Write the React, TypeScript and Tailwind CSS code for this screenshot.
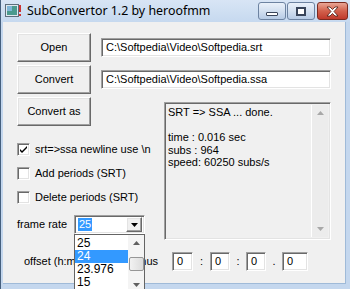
import React from 'react'

const ui = { fontFamily: '"Liberation Sans", Arial, sans-serif' }

const raised =
  'border border-t-white border-l-white border-b-[#696969] border-r-[#696969] shadow-[inset_-1px_-1px_#a0a0a0,inset_1px_1px_#e3e3e3] bg-[#f0f0f0]'
const sunken =
  'border border-t-[#a0a0a0] border-l-[#a0a0a0] border-b-white border-r-white shadow-[inset_1px_1px_#696969,inset_-1px_-1px_#e3e3e3]'

const Btn = ({ label }: { label: string }) => (
  <div className={`${raised} w-[74px] h-[29px] flex items-center justify-center text-[11px] text-black`}>
    {label}
  </div>
)

const PathInput = ({ value }: { value: string }) => (
  <div className={`${sunken} bg-white w-[230px] h-[19px] flex items-center pl-[4px] text-[11px] text-black`}>
    {value}
  </div>
)

const CheckBox = ({ checked, label }: { checked?: boolean; label: string }) => (
  <div className="flex items-center h-[13px] gap-[5px] text-[11px] text-black">
    <div className={`${sunken} bg-white w-[13px] h-[13px] flex items-center justify-center`}>
      {checked && (
        <svg width="9" height="9" viewBox="0 0 9 9">
          <path d="M1 4 L3 6 L8 1 L8 3 L3 8 L1 6 Z" fill="#000" />
        </svg>
      )}
    </div>
    <span>{label}</span>
  </div>
)

const Tri = ({ down, color = '#000' }: { down?: boolean; color?: string }) => (
  <svg width="7" height="4" viewBox="0 0 7 4">
    <path d={down ? 'M0 0 L7 0 L3.5 4 Z' : 'M0 4 L7 4 L3.5 0 Z'} fill={color} />
  </svg>
)

const SmallBox = ({ w }: { w: string }) => (
  <div className={`${sunken} bg-white ${w} h-[19px] flex items-center pl-[4px] text-[11px] text-black`}>0</div>
)

export default function App() {
  return (
    <div
      className="w-[350px] h-[289px] bg-[#c4d7ee] border-l border-[#46607e] flex flex-col overflow-hidden"
      style={ui}
    >
      {/* title bar */}
      <div className="h-[22px] flex items-center bg-gradient-to-b from-[#d8e5f5] to-[#c6d9ef] shrink-0">
        <svg className="ml-[4px]" width="16" height="14" viewBox="0 0 16 14">
          <rect x="0.5" y="0.5" width="13" height="12" fill="#dfe8ef" stroke="#5d6e7c" />
          <rect x="2" y="2" width="10" height="9" fill="#4b9a8e" />
          <rect x="2" y="2" width="5" height="5" fill="#7fb6d8" />
          <rect x="14" y="1" width="2" height="7" fill="#c33" />
          <rect x="14" y="10" width="2" height="2" fill="#c33" />
        </svg>
        <span className="ml-[6px] text-[12.4px] text-black" style={{ fontFamily: '"Noto Sans", sans-serif' }}>
          SubConvertor 1.2 by heroofmm
        </span>
        <div className="ml-auto flex items-start self-start mt-[2px] mr-[2px] gap-[1px]">
          <div className="w-[28px] h-[18px] rounded-[3px] border border-[#6d83a1] bg-gradient-to-b from-[#eaf1fa] via-[#d3e0f0] to-[#b7cbe5] flex items-center justify-center">
            <div className="w-[12px] h-[4px] mt-[5px] rounded-[1px] border border-[#39455a] bg-white" />
          </div>
          <div className="w-[28px] h-[18px] rounded-[3px] border border-[#6d83a1] bg-gradient-to-b from-[#eaf1fa] via-[#d3e0f0] to-[#b7cbe5] flex items-center justify-center">
            <div className="w-[10px] h-[9px] border-2 border-[#39455a] bg-white" />
          </div>
          <div className="w-[31px] h-[18px] ml-[1px] rounded-[3px] border border-[#7b2a1f] bg-gradient-to-b from-[#e8a595] via-[#d2604c] to-[#c0392b] flex items-center justify-center">
            <svg width="13" height="11" viewBox="0 0 13 11">
              <path
                d="M1 1 L4 1 L6.5 3.5 L9 1 L12 1 L8 5.5 L12 10 L9 10 L6.5 7.5 L4 10 L1 10 L5 5.5 Z"
                fill="#fff"
                stroke="#4a1a12"
                strokeWidth="0.8"
              />
            </svg>
          </div>
        </div>
      </div>

      {/* client area */}
      <div className="ml-[2px] w-[343px] h-[262px] bg-[#f0f0f0] border-r border-b border-[#9fbad8] flex flex-col pl-[14px] pt-[11px] text-[11px]">
        <div className="flex items-center gap-[10px]">
          <Btn label="Open" />
          <PathInput value="C:\Softpedia\Video\Softpedia.srt" />
        </div>
        <div className="flex items-center gap-[10px] mt-[3px]">
          <Btn label="Convert" />
          <PathInput value="C:\Softpedia\Video\Softpedia.ssa" />
        </div>

        <div className="flex mt-[3px]">
          <div className="w-[147px] flex flex-col">
            <Btn label="Convert as" />
            <div className="mt-[17px] flex flex-col gap-[11px]">
              <CheckBox checked label="srt=>ssa newline use \n" />
              <CheckBox label="Add periods (SRT)" />
              <CheckBox label="Delete periods (SRT)" />
            </div>
            <div className="flex items-center mt-[11px] relative">
              <span className="w-[57px]">frame rate</span>
              <div className={`${sunken} bg-white w-[71px] h-[19px] flex items-center pl-[3px] pr-[2px]`}>
                <span className="bg-[#3399ff] text-white px-[1px] leading-[13px]">25</span>
                <div className={`${raised} ml-auto w-[16px] h-[15px] flex items-center justify-center`}>
                  <Tri down />
                </div>
              </div>
              {/* open dropdown list */}
              <div className="absolute left-[57px] top-[19px] w-[71px] h-[60px] bg-white border border-[#646464] flex z-10">
                <div className="flex-1 flex flex-col text-[12px] leading-[13px] pt-[2px]">
                  <div className="pl-[2px]">25</div>
                  <div className="pl-[2px] bg-[#3399ff] text-white">24</div>
                  <div className="pl-[2px]">23.976</div>
                  <div className="pl-[2px]">15</div>
                </div>
                <div className="w-[16px] bg-[#f4f4f4] flex flex-col items-center">
                  <div className="h-[16px] flex items-center justify-center">
                    <Tri color="#606060" />
                  </div>
                  <div className="w-[15px] h-[14px] mt-[6px] rounded-[2px] border border-[#969696] bg-gradient-to-r from-[#f2f2f2] to-[#dcdcdc]" />
                  <div className="mt-auto h-[10px] flex items-start justify-center">
                    <Tri down color="#606060" />
                  </div>
                </div>
              </div>
            </div>
          </div>

          {/* memo */}
          <div className={`${sunken} mt-[5px] w-[167px] h-[138px] bg-[#f0f0f0] flex`}>
            <div className="flex-1 pl-[3px] pt-[3px] leading-[12.6px] text-[11px] text-black">
              <div>SRT =&gt; SSA ... done.</div>
              <div>&nbsp;</div>
              <div>time : 0.016 sec</div>
              <div>subs : 964</div>
              <div>speed: 60250 subs/s</div>
            </div>
            <div className="w-[17px] my-[2px] mr-[2px] border-l border-white bg-[#ececec] flex flex-col items-center justify-between py-[6px]">
              <Tri color="#a8a8a8" />
              <Tri down color="#a8a8a8" />
            </div>
          </div>
        </div>

        <div className="flex items-center mt-[12px]">
          <div className="ml-[7px] w-[134px] flex">
            <span>offset (h:m:s.ms)</span>
            <span className="ml-auto">minus</span>
          </div>
          <SmallBox w="w-[21px] ml-[14px]" />
          <span className="w-[17px] text-center">:</span>
          <SmallBox w="w-[20px]" />
          <span className="w-[16px] text-center">:</span>
          <SmallBox w="w-[20px]" />
          <span className="w-[16px] text-center">.</span>
          <SmallBox w="w-[26px]" />
        </div>
      </div>
    </div>
  )
}
